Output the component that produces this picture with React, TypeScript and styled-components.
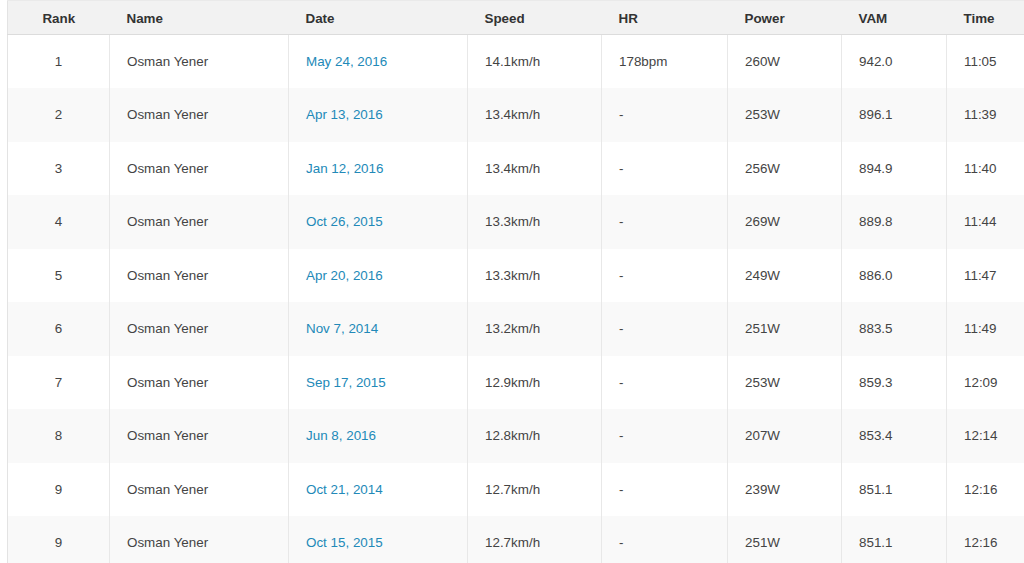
import React from "react";
import styled, { createGlobalStyle } from "styled-components";

const Global = createGlobalStyle`
  html, body { margin: 0; padding: 0; background: #fff; }
  body { font-family: "Liberation Sans", Arial, sans-serif; overflow: hidden; }
`;

const Wrap = styled.div`
  padding: 0 0 0 7px;
  width: 1060px;
`;

const Table = styled.table`
  border-collapse: collapse;
  table-layout: fixed;
  width: 1040px;
  border-left: 1px solid #e3e3e3;
  font-size: 13.4px;
  color: #444;
`;

const Head = styled.thead`
  background: #f2f2f2;
`;

const Th = styled.th<{ $center?: boolean }>`
  height: 31px;
  padding: 2px 0 0 ${(p) => (p.$center ? "0" : "17px")};
  text-align: ${(p) => (p.$center ? "center" : "left")};
  font-weight: bold;
  color: #333;
  border-bottom: 1px solid #dcdcdc;
  border-top: 1px solid #eaeaea;
`;

const Tr = styled.tr<{ $alt?: boolean }>`
  height: 53.5px;
  background: ${(p) => (p.$alt ? "#f9f9f9" : "#fff")};
`;

const Td = styled.td<{ $center?: boolean }>`
  padding: 0 0 0 ${(p) => (p.$center ? "0" : "17px")};
  text-align: ${(p) => (p.$center ? "center" : "left")};
  border-left: ${(p) => (p.$center ? "none" : "1px solid #e8e8e8")};
  white-space: nowrap;
`;

const DateLink = styled.a`
  color: #2289b8;
  text-decoration: none;
`;

type Row = [string, string, string, string, string, string, string];

const rows: Row[] = [
  ["1", "May 24, 2016", "14.1km/h", "178bpm", "260W", "942.0", "11:05"],
  ["2", "Apr 13, 2016", "13.4km/h", "-", "253W", "896.1", "11:39"],
  ["3", "Jan 12, 2016", "13.4km/h", "-", "256W", "894.9", "11:40"],
  ["4", "Oct 26, 2015", "13.3km/h", "-", "269W", "889.8", "11:44"],
  ["5", "Apr 20, 2016", "13.3km/h", "-", "249W", "886.0", "11:47"],
  ["6", "Nov 7, 2014", "13.2km/h", "-", "251W", "883.5", "11:49"],
  ["7", "Sep 17, 2015", "12.9km/h", "-", "253W", "859.3", "12:09"],
  ["8", "Jun 8, 2016", "12.8km/h", "-", "207W", "853.4", "12:14"],
  ["9", "Oct 21, 2014", "12.7km/h", "-", "239W", "851.1", "12:16"],
  ["9", "Oct 15, 2015", "12.7km/h", "-", "251W", "851.1", "12:16"],
];

const widths = [102, 179, 179, 134, 126, 114, 105, 101];

export default function App() {
  return (
    <Wrap>
      <Global />
      <Table>
        <colgroup>
          {widths.map((w, i) => (
            <col key={i} style={{ width: w }} />
          ))}
        </colgroup>
        <Head>
          <tr>
            <Th $center>Rank</Th>
            <Th>Name</Th>
            <Th>Date</Th>
            <Th>Speed</Th>
            <Th>HR</Th>
            <Th>Power</Th>
            <Th>VAM</Th>
            <Th>Time</Th>
          </tr>
        </Head>
        <tbody>
          {rows.map((r, i) => (
            <Tr key={i} $alt={i % 2 === 1}>
              <Td $center>{r[0]}</Td>
              <Td>Osman Yener</Td>
              <Td>
                <DateLink href="#">{r[1]}</DateLink>
              </Td>
              <Td>{r[2]}</Td>
              <Td>{r[3]}</Td>
              <Td>{r[4]}</Td>
              <Td>{r[5]}</Td>
              <Td>{r[6]}</Td>
            </Tr>
          ))}
        </tbody>
      </Table>
    </Wrap>
  );
}
